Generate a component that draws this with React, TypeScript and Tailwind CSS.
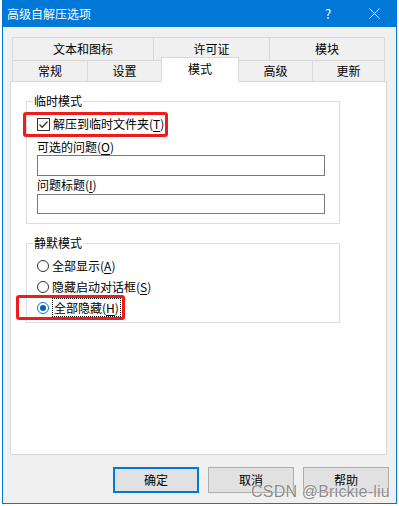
const font = { fontFamily: '"Microsoft YaHei UI", "Noto Sans CJK SC", "Noto Sans", sans-serif' }

function Key({ k }: { k: string }) {
  return (
    <span>
      (<span className="underline underline-offset-2">{k}</span>)
    </span>
  )
}

function Tab({ label, w, last }: { label: string; w: string; last?: boolean }) {
  return (
    <div className={`${w} flex items-center justify-center border-t border-l border-[#d9d9d9] ${last ? 'border-r' : ''}`}>
      {label}
    </div>
  )
}

function Radio({ checked }: { checked?: boolean }) {
  return (
    <span
      className={`w-[12px] h-[12px] rounded-full border flex items-center justify-center bg-white ${
        checked ? 'border-[#0078d7]' : 'border-[#333333]'
      }`}
    >
      {checked && <span className="w-[6px] h-[6px] rounded-full bg-[#0a5fb4]" />}
    </span>
  )
}

function Button({ label, primary }: { label: string; primary?: boolean }) {
  return (
    <button
      className={`w-[86px] h-[26px] bg-[#e1e1e1] text-[12px] text-black flex items-center justify-center ${
        primary ? 'border-2 border-[#0078d7]' : 'border border-[#adadad]'
      }`}
    >
      {label}
    </button>
  )
}

export default function App() {
  return (
    <div className="w-[399px] h-[506px] bg-white overflow-hidden" style={font}>
      <div className="ml-[2px] w-[395px] h-[504px] flex flex-col border-x border-b border-[#0078d7] bg-[#f0f0f0] relative">
        {/* Title bar */}
        <div className="h-[27px] -mx-[1px] bg-[#0078d7] flex items-center text-white text-[12px] pl-[5px]">
          <span className="flex-1">高级自解压选项</span>
          <span className="w-[46px] text-center text-[13px]">?</span>
          <span className="w-[46px] flex justify-center">
            <svg width="11" height="11" viewBox="0 0 11 11">
              <path d="M0.5 0.5 L10.5 10.5 M10.5 0.5 L0.5 10.5" stroke="white" strokeWidth="1" />
            </svg>
          </span>
        </div>

        {/* Tabs */}
        <div className="pt-[10px] pl-[9px] text-[12px] text-black leading-[16px]">
          <div className="flex h-[23px] w-[373px]">
            <Tab label="文本和图标" w="w-[141px]" />
            <Tab label="许可证" w="w-[116px]" />
            <Tab label="模块" w="w-[116px]" last />
          </div>
          <div className="flex items-start h-[21px] w-[373px]">
            <div className="w-[75px] h-[21px] flex items-center justify-center border-t border-l border-[#d9d9d9]">常规</div>
            <div className="w-[74px] h-[21px] flex items-center justify-center border-t border-l border-[#d9d9d9]">设置</div>
            <div className="relative z-10 w-[78px] h-[25px] -mt-[3px] bg-white flex items-center justify-center pb-[3px] border-t border-x border-[#d9d9d9]">
              模式
            </div>
            <div className="w-[73px] h-[21px] flex items-center justify-center border-t border-[#d9d9d9]">高级</div>
            <div className="w-[73px] h-[21px] flex items-center justify-center border-t border-x border-[#d9d9d9]">更新</div>
          </div>
        </div>

        {/* Tab page */}
        <div className="ml-[7px] w-[377px] h-[374px] border border-[#d9d9d9] bg-white text-[12px] text-black leading-[16px] pt-[11px] pl-[15px]">
          <fieldset className="w-[314px] border border-[#dcdcdc] px-[10px] pb-[9px]">
            <legend className="-ml-[4px] px-[1px]">临时模式</legend>
            <div className="relative mt-[6px] h-[18px] flex items-center gap-[3px]">
              <span className="w-[13px] h-[13px] border border-[#333333] flex items-center justify-center">
                <svg width="11" height="11" viewBox="0 0 11 11">
                  <path d="M1.5 5.5 L4.2 8.2 L9.5 2.5" stroke="#333333" strokeWidth="1.3" fill="none" />
                </svg>
              </span>
              <span>
                解压到临时文件夹<Key k="T" />
              </span>
              <div className="absolute -left-[14px] -top-[3px] w-[145px] h-[25px] border-[3px] border-[#f01c1c] rounded-[3px]" />
            </div>
            <div className="mt-[6px] h-[16px]">
              可选的问题<Key k="O" />
            </div>
            <div className="h-[21px] w-[288px] border border-[#7a7a7a] bg-white" />
            <div className="mt-[1px] h-[16px]">
              问题标题<Key k="I" />
            </div>
            <div className="mt-[1px] h-[20px] w-[288px] border border-[#7a7a7a] bg-white" />
          </fieldset>

          <fieldset className="mt-[11px] w-[314px] border border-[#dcdcdc] px-[10px] pb-[4px]">
            <legend className="-ml-[4px] px-[1px]">静默模式</legend>
            <div className="mt-[4px] h-[21px] flex items-center gap-[3px]">
              <Radio />
              <span>
                全部显示<Key k="A" />
              </span>
            </div>
            <div className="h-[21px] flex items-center gap-[3px]">
              <Radio />
              <span>
                隐藏启动对话框<Key k="S" />
              </span>
            </div>
            <div className="relative h-[21px] flex items-center gap-[3px]">
              <Radio checked />
              <span className="border border-dotted border-black px-[1px] leading-[17px]">
                全部隐藏<Key k="H" />
              </span>
              <div className="absolute -left-[21px] -top-[2px] w-[109px] h-[25px] border-[3px] border-[#f01c1c] rounded-[3px]" />
            </div>
          </fieldset>
        </div>

        {/* Buttons */}
        <div className="mt-[12px] pl-[110px] flex gap-[9px]">
          <Button label="确定" primary />
          <Button label="取消" />
          <Button label="帮助" />
        </div>

        <div
          className="absolute left-[248px] top-[480px] text-[16px] tracking-[0.2px] text-[#8a8a8a]"
          style={{ fontFamily: '"Liberation Sans", Arial, sans-serif', textShadow: '0 0 1px #fff, 0 0 1px #fff' }}
        >
          CSDN @Brickie-liu
        </div>
      </div>
    </div>
  )
}
